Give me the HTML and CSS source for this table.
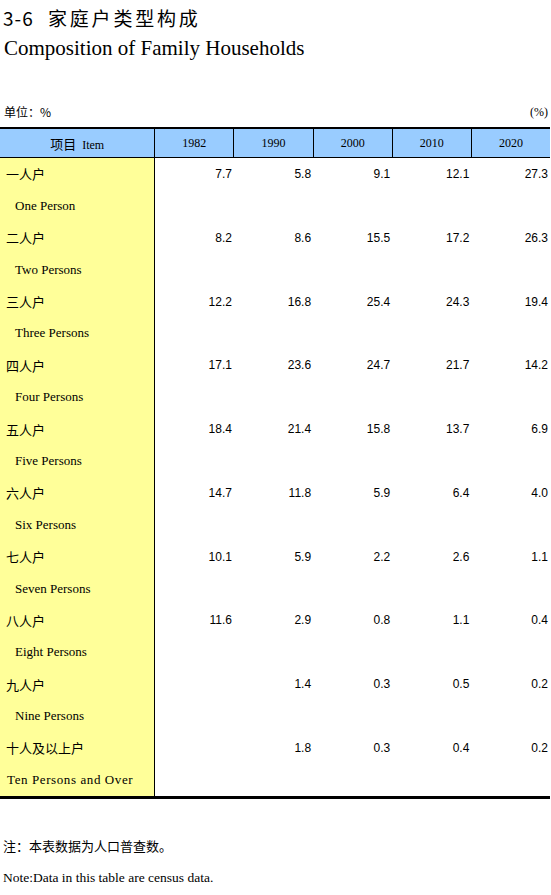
FILE: index.html
```html
<!DOCTYPE html>
<html lang="zh">
<head>
<meta charset="utf-8">
<title>3-6 家庭户类型构成</title>
<link rel="stylesheet" href="styles.css">
</head>
<body>
<div class="page">
  <h1 class="title-cn"><span class="num">3-6</span><span class="txt">家庭户类型构成</span></h1>
  <h2 class="title-en">Composition of Family Households</h2>
  <div class="unit-row">
    <span class="unit-cn">单位：%</span>
    <span class="unit-en">(%)</span>
  </div>
  <table class="data">
    <thead>
      <tr>
        <th class="item-h"><span class="cn">项目</span> Item</th>
        <th>1982</th>
        <th>1990</th>
        <th>2000</th>
        <th>2010</th>
        <th>2020</th>
      </tr>
    </thead>
    <tbody>
      <tr><td class="lab cn">一人户</td><td>7.7</td><td>5.8</td><td>9.1</td><td>12.1</td><td>27.3</td></tr>
      <tr><td class="lab en">One Person</td><td></td><td></td><td></td><td></td><td></td></tr>
      <tr><td class="lab cn">二人户</td><td>8.2</td><td>8.6</td><td>15.5</td><td>17.2</td><td>26.3</td></tr>
      <tr><td class="lab en">Two Persons</td><td></td><td></td><td></td><td></td><td></td></tr>
      <tr><td class="lab cn">三人户</td><td>12.2</td><td>16.8</td><td>25.4</td><td>24.3</td><td>19.4</td></tr>
      <tr><td class="lab en">Three Persons</td><td></td><td></td><td></td><td></td><td></td></tr>
      <tr><td class="lab cn">四人户</td><td>17.1</td><td>23.6</td><td>24.7</td><td>21.7</td><td>14.2</td></tr>
      <tr><td class="lab en">Four Persons</td><td></td><td></td><td></td><td></td><td></td></tr>
      <tr><td class="lab cn">五人户</td><td>18.4</td><td>21.4</td><td>15.8</td><td>13.7</td><td>6.9</td></tr>
      <tr><td class="lab en">Five Persons</td><td></td><td></td><td></td><td></td><td></td></tr>
      <tr><td class="lab cn">六人户</td><td>14.7</td><td>11.8</td><td>5.9</td><td>6.4</td><td>4.0</td></tr>
      <tr><td class="lab en">Six Persons</td><td></td><td></td><td></td><td></td><td></td></tr>
      <tr><td class="lab cn">七人户</td><td>10.1</td><td>5.9</td><td>2.2</td><td>2.6</td><td>1.1</td></tr>
      <tr><td class="lab en">Seven Persons</td><td></td><td></td><td></td><td></td><td></td></tr>
      <tr><td class="lab cn">八人户</td><td>11.6</td><td>2.9</td><td>0.8</td><td>1.1</td><td>0.4</td></tr>
      <tr><td class="lab en">Eight Persons</td><td></td><td></td><td></td><td></td><td></td></tr>
      <tr><td class="lab cn">九人户</td><td></td><td>1.4</td><td>0.3</td><td>0.5</td><td>0.2</td></tr>
      <tr><td class="lab en">Nine Persons</td><td></td><td></td><td></td><td></td><td></td></tr>
      <tr><td class="lab cn">十人及以上户</td><td></td><td>1.8</td><td>0.3</td><td>0.4</td><td>0.2</td></tr>
      <tr class="last"><td class="lab en wide">Ten Persons and Over</td><td></td><td></td><td></td><td></td><td></td></tr>
    </tbody>
  </table>
  <p class="note-cn">注：本表数据为人口普查数。</p>
  <p class="note-en">Note:Data in this table are census data.</p>
</div>
</body>
</html>
```

FILE: styles.css
```css
html, body {
  margin: 0;
  padding: 0;
  background: #ffffff;
  color: #000000;
}

.page {
  width: 551px;
}

.title-cn {
  display: flex;
  align-items: baseline;
  margin: 0;
  padding: 4px 0 0 3px;
  height: 28px;
  font-family: "Noto Sans CJK SC", sans-serif;
  font-weight: normal;
  font-size: 19px;
  line-height: 27px;
}

.title-cn .num {
  width: 45px;
  letter-spacing: 1px;
}

.title-cn .txt {
  letter-spacing: 2.8px;
}

.title-en {
  margin: 0;
  padding: 0 0 0 4px;
  height: 32px;
  font-family: "Liberation Serif", serif;
  font-weight: normal;
  font-size: 21px;
  line-height: 32px;
}

.unit-row {
  display: flex;
  justify-content: space-between;
  align-items: flex-start;
  margin-top: 37px;
  height: 23px;
  padding: 3px 3px 0 4px;
  line-height: 16px;
}

.unit-cn {
  font-family: "Noto Sans CJK SC", sans-serif;
  font-size: 12px;
}

.unit-en {
  font-family: "Liberation Serif", serif;
  font-size: 12px;
}

.data {
  border-collapse: collapse;
  table-layout: fixed;
  width: 550px;
  border-top: 2px solid #000;
  border-bottom: 3px solid #000;
}

.data th {
  background: #99ccff;
  height: 28px;
  padding: 0;
  font-family: "Liberation Serif", serif;
  font-weight: normal;
  font-size: 12px;
  text-align: center;
  border-left: 1px solid #000;
  border-bottom: 1px solid #000;
  width: 78px;
}

.data th.item-h {
  width: 154px;
  border-left: none;
}

.data th .cn {
  font-family: "Noto Sans CJK SC", sans-serif;
  font-size: 13px;
  margin-right: 3px;
}

.data td {
  height: 31.9px;
  padding: 0 2px 0 0;
  font-family: "Liberation Sans", Arial, sans-serif;
  font-size: 12px;
  text-align: right;
  vertical-align: middle;
}

.data td.lab {
  background: #ffff99;
  border-right: 1px solid #000;
  text-align: left;
}

.data td.cn {
  padding-left: 6px;
  font-family: "Noto Sans CJK SC", sans-serif;
  font-size: 13px;
}

.data td.en {
  padding-left: 15px;
  font-family: "Liberation Serif", serif;
  font-size: 13px;
}

.data td.en.wide {
  padding-left: 7px;
  letter-spacing: 0.6px;
}

.note-cn {
  margin: 37px 0 0 3px;
  font-family: "Noto Sans CJK SC", sans-serif;
  font-size: 13px;
  line-height: 20px;
}

.note-en {
  margin: 12px 0 0 3px;
  font-family: "Liberation Serif", serif;
  font-size: 13.5px;
  line-height: 20px;
}
```
